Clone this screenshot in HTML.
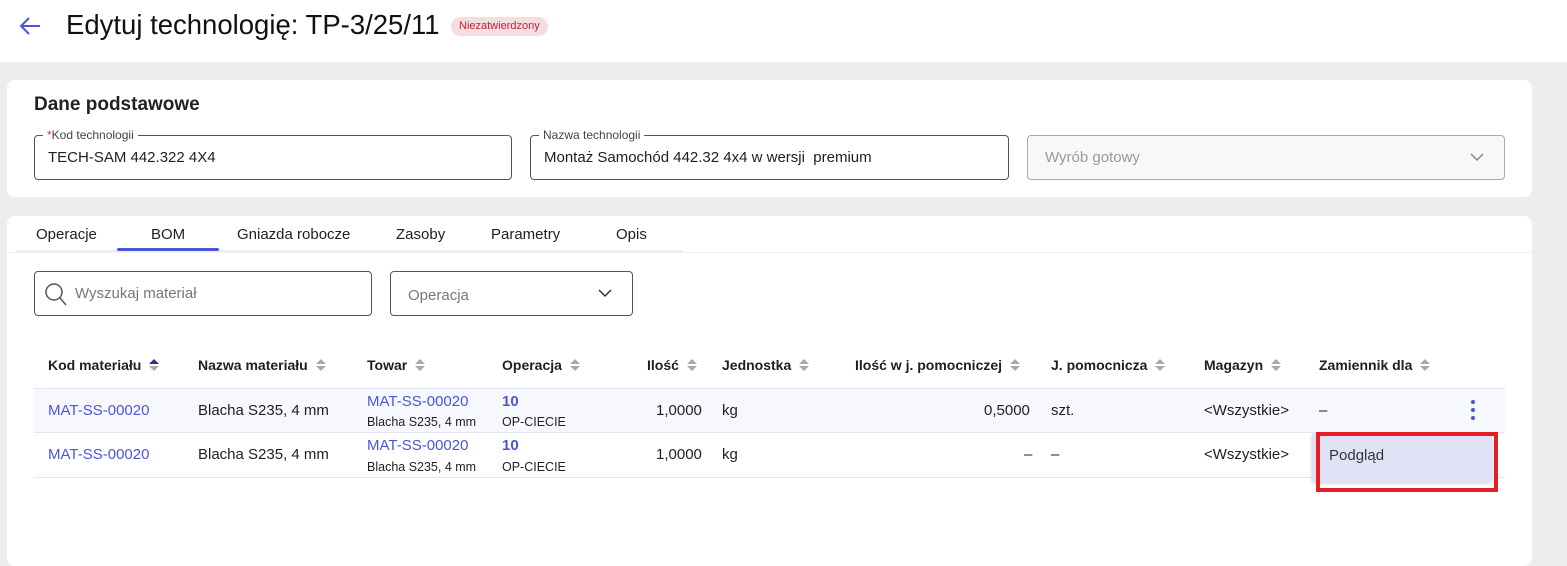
<!DOCTYPE html>
<html><head><meta charset="utf-8"><style>
*{margin:0;padding:0;box-sizing:border-box}
body{width:1567px;height:552px;background:#ededed;font-family:"Liberation Sans",sans-serif;color:#1f1f1f;position:relative;overflow:hidden}
.a{position:absolute;white-space:nowrap}
.hdr{position:absolute;left:0;top:0;width:1567px;height:62px;background:#fff}
.card{position:absolute;left:7px;width:1525px;background:#fff;border-radius:8px}
.fld{position:absolute;border:1px solid #555;border-radius:4px;height:45px}
.lbl{position:absolute;top:-8px;left:8px;background:#fff;padding:0 4px;font-size:12px;color:#444}
.val{position:absolute;left:13px;top:13px;font-size:15px}
.th{font-size:14px;font-weight:bold;top:357px}
.s{display:inline-block;width:9px;height:14px;vertical-align:-2px;margin-left:8px;position:relative}
.s:before,.s:after{content:"";position:absolute;left:0;border-left:5px solid transparent;border-right:5px solid transparent}
.s:before{top:1px;border-bottom:5px solid #aaa}
.s:after{top:8px;border-top:5px solid #aaa}
.s.on:before{border-bottom-color:#2c2f8a}
.td{font-size:15px}
.lk{color:#4a56d6;font-size:15px}
.sm{font-size:12.5px}
</style></head><body>
<div class="hdr"></div>
<svg class="a" style="left:18px;top:15px" width="24" height="22" viewBox="0 0 24 22"><path d="M22 11H3M11 3L3 11l8 8" fill="none" stroke="#4a56d6" stroke-width="2"/></svg>
<div class="a" style="left:66px;top:9px;font-size:27.5px;color:#111">Edytuj technologię: TP-3/25/11</div>
<div class="a" style="left:451px;top:17px;height:19px;padding:0 8px;border-radius:10px;background:#f6dde0;color:#c0223a;font-size:11px;line-height:19px">Niezatwierdzony</div>

<div class="card" style="top:80px;height:117px"></div>
<div class="a" style="left:34px;top:94px;font-size:19px;font-weight:bold;color:#222">Dane podstawowe</div>
<div class="fld" style="left:34px;top:135px;width:478px"><span class="lbl"><span style="color:#d33">*</span>Kod technologii</span><span class="val">TECH-SAM 442.322 4X4</span></div>
<div class="fld" style="left:530px;top:135px;width:479px"><span class="lbl">Nazwa technologii</span><span class="val">Montaż Samochód 442.32 4x4 w wersji&nbsp; premium</span></div>
<div class="fld" style="left:1027px;top:135px;width:478px;background:#f7f8fa;border-color:#aaa"><span class="val" style="left:17px;color:#999">Wyrób gotowy</span>
<svg class="a" style="left:442px;top:17px" width="14" height="9"><path d="M1 1l6 6 6-6" fill="none" stroke="#888" stroke-width="1.5"/></svg></div>

<div class="card" style="top:216px;height:350px"></div>
<div class="a" style="left:16px;top:250px;width:666px;height:2px;background:#eee"></div>
<div class="a" style="left:0;top:252px;width:1532px;height:1px;background:#f1f1f1"></div>
<div class="a" style="left:36px;top:226px;font-size:15px">Operacje</div>
<div class="a" style="left:151px;top:226px;font-size:15px">BOM</div>
<div class="a" style="left:117px;top:248px;width:102px;height:3px;background:#4a56d6;border-radius:2px"></div>
<div class="a" style="left:237px;top:226px;font-size:15px">Gniazda robocze</div>
<div class="a" style="left:396px;top:226px;font-size:15px">Zasoby</div>
<div class="a" style="left:491px;top:226px;font-size:15px">Parametry</div>
<div class="a" style="left:616px;top:226px;font-size:15px">Opis</div>

<div class="fld" style="left:34px;top:271px;width:338px"><svg class="a" style="left:9px;top:10px" width="24" height="25"><circle cx="10" cy="10" r="8" fill="none" stroke="#555" stroke-width="1.5"/><path d="M16 16l6 7" stroke="#555" stroke-width="1.5"/></svg><span class="val" style="left:40px;top:13px;color:#777">Wyszukaj materiał</span></div>
<div class="fld" style="left:390px;top:271px;width:243px"><span class="val" style="left:17px;top:15px;color:#777">Operacja</span><svg class="a" style="left:207px;top:17px" width="14" height="9"><path d="M1 1l6 6 6-6" fill="none" stroke="#333" stroke-width="1.5"/></svg></div>

<div class="a th" style="left:48px">Kod materiału<span class="s on"></span></div>
<div class="a th" style="left:198px">Nazwa materiału<span class="s"></span></div>
<div class="a th" style="left:367px">Towar<span class="s"></span></div>
<div class="a th" style="left:502px">Operacja<span class="s"></span></div>
<div class="a th" style="left:647px">Ilość<span class="s"></span></div>
<div class="a th" style="left:722px">Jednostka<span class="s"></span></div>
<div class="a th" style="left:855px">Ilość w j. pomocniczej<span class="s"></span></div>
<div class="a th" style="left:1051px">J. pomocnicza<span class="s"></span></div>
<div class="a th" style="left:1204px">Magazyn<span class="s"></span></div>
<div class="a th" style="left:1319px">Zamiennik dla<span class="s"></span></div>

<div class="a" style="left:34px;top:388px;width:1471px;height:45px;background:#f7f8fe;border-top:1px solid #e3e5f5;border-bottom:1px solid #e3e5f5"></div>
<div class="a" style="left:34px;top:477px;width:1471px;height:1px;background:#e3e5f5"></div>

<div class="a lk" style="left:48px;top:402px">MAT-SS-00020</div>
<div class="a td" style="left:198px;top:402px">Blacha S235, 4 mm</div>
<div class="a lk" style="left:367px;top:393px">MAT-SS-00020</div>
<div class="a sm" style="left:367px;top:415px">Blacha S235, 4 mm</div>
<div class="a lk" style="left:502px;top:393px;font-weight:bold">10</div>
<div class="a sm" style="left:502px;top:415px">OP-CIECIE</div>
<div class="a td" style="left:656px;top:402px">1,0000</div>
<div class="a td" style="left:722px;top:402px">kg</div>
<div class="a td" style="left:984px;top:402px">0,5000</div>
<div class="a td" style="left:1051px;top:402px">szt.</div>
<div class="a td" style="left:1204px;top:402px">&lt;Wszystkie&gt;</div>
<div class="a td" style="left:1319px;top:402px">–</div>
<div class="a" style="left:1471px;top:400px;width:4px;height:4px;border-radius:2px;background:#4a56d6;box-shadow:0 8px 0 #4a56d6,0 16px 0 #4a56d6"></div>

<div class="a lk" style="left:48px;top:446px">MAT-SS-00020</div>
<div class="a td" style="left:198px;top:446px">Blacha S235, 4 mm</div>
<div class="a lk" style="left:367px;top:437px">MAT-SS-00020</div>
<div class="a sm" style="left:367px;top:460px">Blacha S235, 4 mm</div>
<div class="a lk" style="left:502px;top:437px;font-weight:bold">10</div>
<div class="a sm" style="left:502px;top:460px">OP-CIECIE</div>
<div class="a td" style="left:656px;top:446px">1,0000</div>
<div class="a td" style="left:722px;top:446px">kg</div>
<div class="a td" style="left:1024px;top:446px">–</div>
<div class="a td" style="left:1051px;top:446px">–</div>
<div class="a td" style="left:1204px;top:446px">&lt;Wszystkie&gt;</div>

<div class="a" style="left:1312px;top:434px;width:180px;height:48px;background:#e2e2f6;box-shadow:0 1px 4px rgba(0,0,0,.2)"></div>
<div class="a" style="left:1316px;top:432px;width:182px;height:60px;border:4px solid #e21f26"></div>
<div class="a" style="left:1329px;top:447px;font-size:15px;color:#333">Podgląd</div>
</body></html>
